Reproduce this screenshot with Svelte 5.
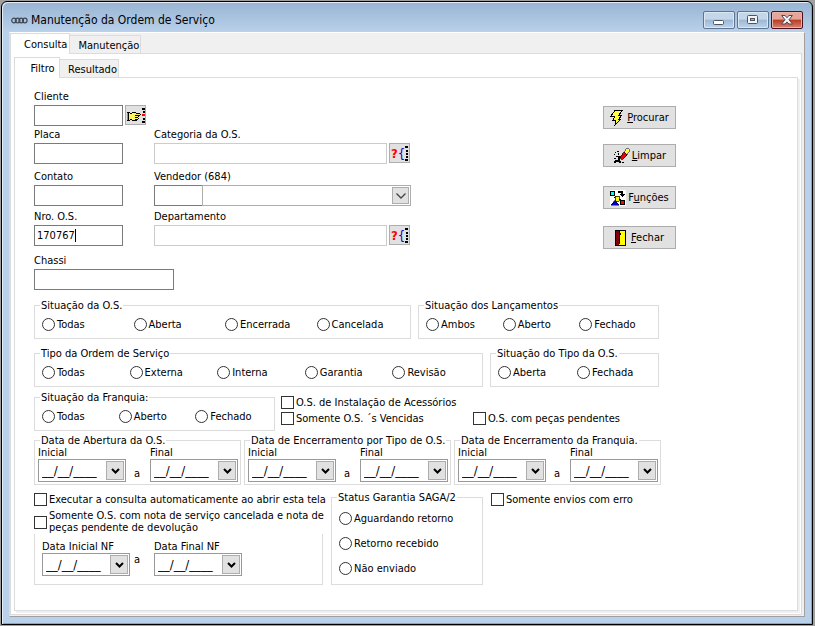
<script>
	let main_tab = $state("Consulta");
	let sub_tab = $state("Filtro");
	let order_number = $state("170767");

	const main_tabs = ["Consulta", "Manutenção"];
	const sub_tabs = ["Filtro", "Resultado"];

	const clear = () => {
		order_number = "";
	};
</script>

{#snippet tabs(list, current, select)}
	<div class="tabs" role="tablist">
		{#each list as tab}
			<button class="tab" class:active={tab === current} role="tab" aria-selected={tab === current} onclick={() => select(tab)}>
				{tab}
			</button>
		{/each}
	</div>
{/snippet}

{#snippet radios(name, title, options, stacked = false)}
	<fieldset class="group">
		<legend>{title}</legend>
		<div class={stacked ? "options stacked" : "options"}>
			{#each options as option}
				<label class="choice"><input type="radio" {name} value={option} />{option}</label>
			{/each}
		</div>
	</fieldset>
{/snippet}

{#snippet date_field(id, label)}
	<div class="date-field">
		<label for={id}>{label}</label>
		<div class="date-box">
			<input {id} type="text" value="__/__/____" />
			<button type="button" aria-label="Abrir calendário">
				<svg width="9" height="6" viewBox="0 0 9 6"><path d="M1 1l3.5 3.5L8 1" fill="none" stroke="#000" stroke-width="2" /></svg>
			</button>
		</div>
	</div>
{/snippet}

{#snippet date_range(id, from, to)}
	<div class="date-range">
		{@render date_field(`${id}-from`, from)}
		<span class="sep">a</span>
		{@render date_field(`${id}-to`, to)}
	</div>
{/snippet}

{#snippet lookup(label)}
	<button class="lookup" type="button" aria-label={label}>
		<span class="mark">?</span><span class="brace">{"{"}</span>
		<svg width="3" height="15" viewBox="0 0 3 15" shape-rendering="crispEdges">
			<path d="M0 0h3v2H0zM1 4h2v2H1zM1 7h2v2H1zM1 10h2v2H1zM0 13h3v2H0z" />
		</svg>
	</button>
{/snippet}

<div class="window">
	<header class="title-bar">
		<svg width="17" height="7" viewBox="0 0 17 7" fill="none" stroke="#3f4856" stroke-width="1.2">
			<ellipse cx="3" cy="3.5" rx="2.3" ry="2.4" />
			<ellipse cx="6.6" cy="3.5" rx="2.3" ry="2.4" />
			<ellipse cx="10.2" cy="3.5" rx="2.3" ry="2.4" />
			<ellipse cx="13.8" cy="3.5" rx="2.3" ry="2.4" />
		</svg>
		<h1>Manutenção da Ordem de Serviço</h1>
		<div class="controls">
			<button aria-label="Minimizar">
				<svg width="12" height="12" viewBox="0 0 12 12"><rect x=".5" y="6.5" width="10" height="4" rx="1" fill="#fff" stroke="#4c5566" /></svg>
			</button>
			<button aria-label="Restaurar">
				<svg width="12" height="10" viewBox="0 0 12 10" stroke="#4c5566"><rect x=".5" y=".5" width="10" height="8" rx="1" fill="#f4f4f4" /><rect x="3.5" y="3.5" width="4" height="2" fill="#9db6d0" /></svg>
			</button>
			<button class="close" aria-label="Fechar janela">
				<svg width="12" height="10" viewBox="0 0 12 10"><path d="M.7.5h3.4L6 2.7 7.900.5h3.400L8 4.800 11.500 9H8L6 6.900 4 9H.5L4 4.800z" fill="#f4f4f4" stroke="#4b4858" /></svg>
			</button>
		</div>
	</header>

	<main class="client">
		{@render tabs(main_tabs, main_tab, (tab) => (main_tab = tab))}
		<div class="pane outer">
			{@render tabs(sub_tabs, sub_tab, (tab) => (sub_tab = tab))}
			<form class="pane inner">
				<section class="fields">
					<div class="field col-1 row-1">
						<label for="cliente">Cliente</label>
						<div class="line">
							<input id="cliente" type="text" />
							<button class="lookup" type="button" aria-label="Buscar cliente">
								<svg width="18" height="15" viewBox="0 0 18 15" shape-rendering="crispEdges">
									<path d="M0 5h1v8H0z" fill="#00c8c8" />
									<path d="M3 6h2V5h3v1h5v1H9v1h2v1h-1v1h1v1h-1v1H5v-1H3z" fill="#fff35c" />
									<path d="M0 4h3v1H2v7h1v1H0v-1h1V5H0zM3 5h2v1H3zM5 4h4v1H5zM9 5h4v1H9zM13 6h1v1h-1zM8 7h5v1H8zM11 8h1v1h-1zM8 9h3v1H8zM11 10h1v1h-1zM8 11h3v1H8zM5 12h5v1H5zM3 11h2v1H3z" />
									<path d="M15 0h3v2h-3zM16 3h2v2h-2zM16 10h2v2h-2zM15 13h3v2h-3z" />
									<path d="M15 6h3v2h-3z" fill="#f00" />
								</svg>
							</button>
						</div>
					</div>
					<div class="field col-1 row-2">
						<label for="placa">Placa</label>
						<div class="line"><input id="placa" type="text" /></div>
					</div>
					<div class="field col-1 row-3">
						<label for="contato">Contato</label>
						<div class="line"><input id="contato" type="text" /></div>
					</div>
					<div class="field col-1 row-4">
						<label for="numero">Nro. O.S.</label>
						<div class="line"><input id="numero" class="current" type="text" bind:value={order_number} /></div>
					</div>
					<div class="field col-1 row-5">
						<label for="chassi">Chassi</label>
						<div class="line"><input id="chassi" class="long" type="text" /></div>
					</div>

					<div class="field col-2 row-2">
						<label for="categoria">Categoria da O.S.</label>
						<div class="line">
							<input id="categoria" class="wide" type="text" disabled />
							{@render lookup("Buscar categoria")}
						</div>
					</div>
					<div class="field col-2 row-3">
						<label for="vendedor">Vendedor (684)</label>
						<div class="line combo">
							<input id="vendedor" type="text" />
							<select aria-label="Nome do vendedor"><option></option></select>
							<span class="arrow">
								<svg width="10" height="6" viewBox="0 0 10 6"><path d="M.5.5L5 5 9.500.5" fill="none" stroke="#444" stroke-width="1.3" /></svg>
							</span>
						</div>
					</div>
					<div class="field col-2 row-4">
						<label for="departamento">Departamento</label>
						<div class="line">
							<input id="departamento" class="wide" type="text" disabled />
							{@render lookup("Buscar departamento")}
						</div>
					</div>

					<button class="action row-1" type="button">
						<svg width="13" height="16" viewBox="0 0 13 16" shape-rendering="crispEdges">
							<path d="M5 .5h7L9 5h3L9 9h2l-6 6 1-5H3l2-4H1z" fill="#ffff40" stroke="#000" />
						</svg>
						<span><u>P</u>rocurar</span>
					</button>
					<button class="action tight row-2" type="button" onclick={clear}>
						<svg width="17" height="16" viewBox="0 0 17 16" shape-rendering="crispEdges">
							<path d="M11 4l3-4 3 2-3 5z" fill="#ffff40" stroke="#000" stroke-width=".5" />
							<path d="M7 9l4-5 3 3-4 4H8z" fill="#f00000" stroke="#000" stroke-width=".7" />
							<path d="M2 4h1v1H2zM4 3h2v1H4zM1 6h1v1H1zM5 5h1v2H5zM3 8h4v1H3zM1 10h2v1H1zM5 9h2v4H5zM2 12h4v2H2zM1 13h2v2H1zM6 13h2v2H6zM9 14h2v1H9z" />
						</svg>
						<span><u>L</u>impar</span>
					</button>
					<button class="action tight row-3" type="button">
						<svg width="16" height="16" viewBox="0 0 16 16" shape-rendering="crispEdges">
							<path d="M0 0h16v16H0z" fill="#fff" />
							<path d="M.5 1.500h4v4h-4z" fill="#0ff" stroke="#000" />
							<path d="M8 1h5v3h2l-3 3-3-3h2V3H8z" />
							<path d="M5 6h4v5H5z" fill="#ff0" stroke="#000" stroke-width=".7" />
							<path d="M5 10l4 5H1z" fill="#0000c8" stroke="#000" stroke-width=".5" />
							<path d="M10.500 10.500h4v4h-4z" fill="#f00" stroke="#000" />
							<path d="M4 7h1v1H4zM9 9h2v1H9z" />
						</svg>
						<span>F<u>u</u>nções</span>
					</button>
					<button class="action row-4" type="button">
						<svg width="12" height="16" viewBox="0 0 12 16" shape-rendering="crispEdges">
							<path d="M.5.5h10v15H.5z" fill="#ff0" stroke="#000" />
							<path d="M1 1h3l1 2v11l-2 1H1z" fill="#800010" />
							<path d="M4 1h1v2h1v2H5v2H4zM4 8h1v5H4z" />
						</svg>
						<span><u>F</u>echar</span>
					</button>
				</section>

				<section class="filters">
					<div class="row situation">
						{@render radios("situacao", "Situação da O.S.", ["Todas", "Aberta", "Encerrada", "Cancelada"])}
						{@render radios("lancamentos", "Situação dos Lançamentos", ["Ambos", "Aberto", "Fechado"])}
					</div>
					<div class="row type">
						{@render radios("tipo", "Tipo da Ordem de Serviço", ["Todas", "Externa", "Interna", "Garantia", "Revisão"])}
						{@render radios("situacao-tipo", "Situação do Tipo da O.S.", ["Aberta", "Fechada"])}
					</div>
					<div class="row franchise">
						{@render radios("franquia", "Situação da Franquia:", ["Todas", "Aberto", "Fechado"])}
						<div class="checks">
							<label class="choice full"><input type="checkbox" />O.S. de Instalação de Acessórios</label>
							<label class="choice"><input type="checkbox" />Somente O.S. ´s Vencidas</label>
							<label class="choice"><input type="checkbox" />O.S. com peças pendentes</label>
						</div>
					</div>
					<div class="row dates">
						<fieldset class="group">
							<legend>Data de Abertura da O.S.</legend>
							{@render date_range("abertura", "Inicial", "Final")}
						</fieldset>
						<fieldset class="group">
							<legend>Data de Encerramento por Tipo de O.S.</legend>
							{@render date_range("encerramento", "Inicial", "Final")}
						</fieldset>
						<fieldset class="group">
							<legend>Data de Encerramento da Franquia.</legend>
							{@render date_range("encerramento-franquia", "Inicial", "Final")}
						</fieldset>
					</div>
					<div class="row bottom">
						<div class="stack">
							<label class="choice"><input type="checkbox" />Executar a consulta automaticamente ao abrir esta tela</label>
							<fieldset class="group invoice">
								<legend>
									<label class="choice">
										<input type="checkbox" />
										<span>Somente O.S. com nota de serviço cancelada e nota de<br />peças pendente de devolução</span>
									</label>
								</legend>
								{@render date_range("nf", "Data Inicial NF", "Data Final NF")}
							</fieldset>
						</div>
						{@render radios("saga", "Status Garantia SAGA/2", ["Aguardando retorno", "Retorno recebido", "Não enviado"], true)}
						<div class="stack">
							<label class="choice"><input type="checkbox" />Somente envios com erro</label>
						</div>
					</div>
				</section>
			</form>
		</div>
	</main>
</div>

<style>
	:global(body) {
		background: #a0a0a0;
	}

	.window {
		margin: 1px 2px 1px 1px;
		padding: 0 7px 7px;
		border: 1px solid #000;
		border-radius: 6px 6px 0 0;
		background: linear-gradient(#98b4d2, #b9d1ea 30px);
		box-shadow: inset 1px 1px #e4eef8, inset -1px -1px #35c8e0;
		font: 11px/13px "DejaVu Sans Condensed", "Noto Sans", sans-serif;
		color: #000;
	}

	.window * {
		box-sizing: border-box;
	}

	button,
	input,
	select {
		margin: 0;
		padding: 0;
		border-radius: 0;
		font: inherit;
		color: inherit;
	}

	.title-bar {
		display: flex;
		align-items: center;
		height: 30px;
		padding: 6px 2px 0;
	}

	h1 {
		flex: 1;
		margin: 0 0 0 3px;
		font-size: 12px;
		font-weight: normal;
	}

	.controls {
		display: flex;
		gap: 2px;
	}

	.controls button {
		display: flex;
		align-items: center;
		justify-content: center;
		width: 32px;
		height: 18px;
		border: 1px solid #5e7592;
		border-radius: 2px;
		background: linear-gradient(#c3d6ea 45%, #9db8d4 50%, #bdd3ea);
		box-shadow: inset 0 0 0 1px #dbe7f3;
	}

	.controls .close {
		border-color: #4a1220;
		background: linear-gradient(#e6a598 45%, #b83a24 50%, #d88470);
		box-shadow: inset 0 0 0 1px #e9b3a8;
	}

	.client {
		padding: 0 2px 1px 0;
		border: 1px solid #a0a0a0;
		border-top-color: #fff;
		border-left-color: #dcdcdc;
		background: #f0f0f0;
	}

	.tabs {
		display: flex;
		align-items: flex-end;
		height: 20px;
	}

	.outer .tabs {
		background: #fff;
	}

	.tab {
		height: 18px;
		padding: 1px 1px 0 8px;
		border: 1px solid #dcdcdc;
		border-width: 1px 1px 0 0;
		background: #f0f0f0;
	}

	.tab.active {
		position: relative;
		min-width: 46px;
		height: 21px;
		margin-bottom: -1px;
		padding: 0 2px 0 13px;
		border-left-width: 1px;
		background: #fff;
	}

	.pane {
		border: 1px solid #dcdcdc;
		background: #fff;
	}

	.outer {
		padding: 3px;
	}

	.inner {
		padding: 12px 0 25px 19px;
		box-shadow: 2px 2px #f0f0f0;
	}

	.fields {
		display: grid;
		grid-template-columns: 120px 257px 1fr;
		grid-template-rows: 38px 42px 40px 44px 45px;
		padding-right: 121px;
	}

	.col-1 { grid-column: 1; }
	.col-2 { grid-column: 2; }
	.row-1 { grid-row: 1; }
	.row-2 { grid-row: 2; }
	.row-3 { grid-row: 3; }
	.row-4 { grid-row: 4; }
	.row-5 { grid-row: 5; }

	.field label {
		display: block;
		margin-bottom: 2px;
	}

	.line {
		position: relative;
		display: flex;
		gap: 2px;
	}

	.line input {
		flex: none;
		width: 89px;
		height: 21px;
		padding: 0 2px;
		border: 1px solid #7a7a7a;
		background: #fff;
		outline: none;
	}

	.line .long {
		width: 140px;
	}

	.line .wide {
		width: 233px;
		border-color: #ccc;
	}

	/* text cursor at the end of the number */
	.line .current {
		background: linear-gradient(#000, #000) 40px 3px / 1px 13px no-repeat #fff;
	}

	.combo {
		gap: 0;
	}

	.combo input {
		width: 49px;
	}

	.combo select {
		flex: 1;
		height: 21px;
		margin-left: -1px;
		border: 1px solid #adadad;
		background: none;
		appearance: none;
	}

	.arrow {
		position: absolute;
		top: 2px;
		right: 2px;
		display: flex;
		align-items: center;
		justify-content: center;
		width: 17px;
		height: 17px;
		border: 1px solid #adadad;
		background: #e1e1e1;
		pointer-events: none;
	}

	.lookup {
		display: flex;
		flex: none;
		align-items: center;
		justify-content: center;
		width: 21px;
		height: 20px;
		border: 1px solid #adadad;
		background: #e1e1e1;
	}

	.mark {
		font-weight: bold;
		font-size: 13px;
		color: #f00;
	}

	.brace {
		font-size: 13px;
		color: #0000d0;
	}

	.action {
		display: flex;
		grid-column: 3;
		align-items: center;
		justify-content: center;
		justify-self: end;
		gap: 4px;
		width: 73px;
		height: 23px;
		margin-top: 16px;
		border: 1px solid #adadad;
		background: #e1e1e1;
	}

	.tight {
		gap: 2px;
	}

	.filters {
		padding-right: 136px;
	}

	.row {
		display: grid;
		column-gap: 7px;
	}

	.situation {
		grid-template-columns: 377fr 241fr;
		margin-bottom: 8px;
		padding-right: 2px;
	}

	.type {
		grid-template-columns: 449fr 169fr;
		margin-bottom: 4px;
		padding-right: 2px;
	}

	.franchise {
		grid-template-columns: 241fr 380fr;
		column-gap: 6px;
		margin-bottom: 3px;
	}

	.dates {
		grid-template-columns: repeat(3, 1fr);
		column-gap: 3px;
		margin-bottom: 6px;
	}

	.bottom {
		grid-template-columns: minmax(0, 289fr) 152fr 170fr;
		column-gap: 8px;
	}

	.group {
		min-width: 0;
		margin: 0;
		padding: 0 2px 0 3px;
		border: 1px solid #dcdcdc;
	}

	legend {
		margin-left: 2px;
		padding: 0 1px;
		white-space: nowrap;
	}

	.options {
		display: grid;
		grid-auto-flow: column;
		grid-auto-columns: 1fr;
		padding: 6px 0 7px 4px;
	}

	.stacked {
		grid-auto-flow: row;
		row-gap: 12px;
		padding: 8px 0 9px 4px;
	}

	.choice {
		display: flex;
		align-items: center;
		gap: 2px;
		white-space: nowrap;
	}

	.choice input {
		flex: none;
		width: 13px;
		height: 13px;
		border: 1px solid #333;
		background: #fff;
		appearance: none;
	}

	.choice input:checked {
		background: #333;
		box-shadow: inset 0 0 0 2px #fff;
	}

	.choice input[type="radio"] {
		border-radius: 50%;
	}

	.checks {
		display: grid;
		grid-template-columns: 192fr 188fr;
		align-content: start;
		row-gap: 3px;
		padding-top: 5px;
	}

	.full {
		grid-column: 1 / -1;
	}

	.date-range {
		display: flex;
		padding-bottom: 2px;
	}

	.date-field {
		flex: none;
		width: 88px;
	}

	.date-field label {
		display: block;
		line-height: 12px;
	}

	.date-box {
		display: flex;
		height: 23px;
		padding: 1px;
		border: 1px solid #999;
	}

	.date-box input {
		flex: 1;
		min-width: 0;
		padding-left: 2px;
		border: 0;
		background: none;
		outline: none;
		font-size: 13px;
	}

	.date-box button {
		display: flex;
		align-items: center;
		justify-content: center;
		width: 18px;
		border: 1px solid #adadad;
		background: #e1e1e1;
	}

	.sep {
		flex: none;
		align-self: flex-end;
		width: 24px;
		padding: 0 0 2px 8px;
	}

	.stack {
		display: flex;
		flex-direction: column;
		gap: 4px;
		padding-top: 2px;
	}

	.invoice legend {
		margin-left: -4px;
		padding: 0;
		background: #fff;
		line-height: 12px;
	}

	.invoice .date-range {
		padding: 7px 0 8px 4px;
	}

	.invoice .sep {
		padding: 0 0 10px 4px;
	}
</style>
